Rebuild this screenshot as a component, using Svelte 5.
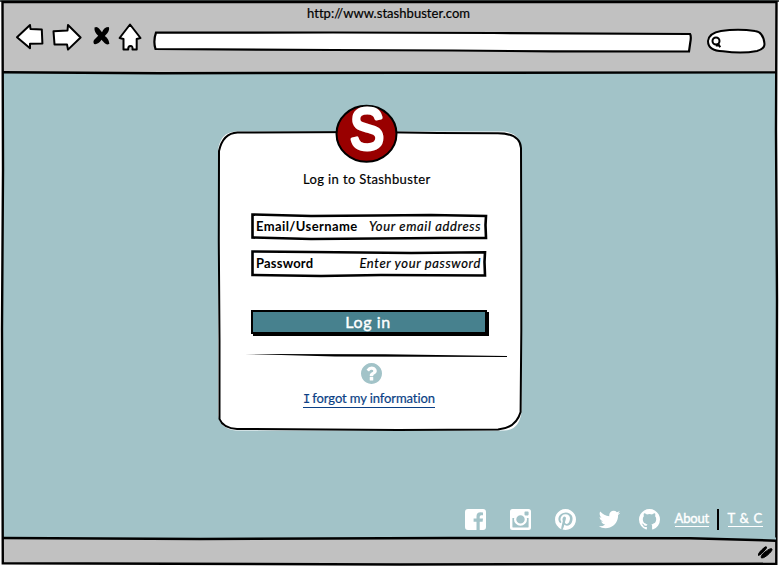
<script>
  const social = [
    { name: 'Facebook', gap: 0, box: '0 0 21 21', d: 'M3 0H18Q21 0 21 3V18Q21 21 18 21H14.7V12.8H17.6L18 9.6H14.7V7.8Q14.7 6.3 16.3 6.3H18V3.4Q17.2 3.2 15.6 3.2Q11.5 3.2 11.5 7.2V9.6H8.6V12.8H11.5V21H3Q0 21 0 18V3Q0 0 3 0Z' },
    { name: 'Instagram', gap: 24, box: '0 0 21 21', d: 'M2.5 0H18.5Q21 0 21 2.5V18.5Q21 21 18.5 21H2.5Q0 21 0 18.5V2.5Q0 0 2.5 0ZM15.3 2.4Q14.5 2.4 14.5 3.2V5.6Q14.5 6.4 15.3 6.4H17.8Q18.6 6.4 18.6 5.6V3.2Q18.6 2.4 17.8 2.4ZM2.4 8.9V17.7Q2.4 18.6 3.3 18.6H17.7Q18.6 18.6 18.6 17.7V8.9H16.8Q17 9.7 17 10.4A6.5 6.3 0 1 1 4 10.4Q4 9.7 4.3 8.9ZM10.5 6.2A4.2 4.2 0 1 0 10.5 14.6A4.2 4.2 0 1 0 10.5 6.2Z' },
    { name: 'Pinterest', gap: 24, box: '128 128 1536 1536', d: 'M1664 896q0 209-103 385.5t-279.5 279.5-385.5 103q-111 0-218-32 59-93 78-164 9-34 54-211 20 39 73 67.5t114 28.5q121 0 216-68.5t147-188.5 52-270q0-114-59.5-214t-172.5-163-255-63q-105 0-196 29t-154.5 77-109 110.5-67 129.5-21.5 134q0 104 40 183t117 111q30 12 38-20 2-7 8-31t8-30q6-23-11-43-51-61-51-151 0-151 104.5-259.5t273.5-108.5q151 0 235.5 82t84.5 213q0 170-68.5 289t-175.5 119q-61 0-98-43.5t-23-104.5q8-35 26.5-93.5t30-103 11.5-75.5q0-50-27-83t-77-33q-62 0-105 57t-43 142q0 73 25 122l-99 418q-17 70-13 177-206-91-333-281t-127-423q0-209 103-385.5t279.5-279.5 385.5-103 385.5 103 279.5 279.5 103 385.5z' },
    { name: 'Twitter', gap: 23, box: '128 128 1536 1536', d: 'M1684 408q-67 98-162 167 1 14 1 42 0 130-38 259.5t-115.5 248.5-184.5 210.5-258 146-323 54.5q-271 0-496-145 35 4 78 4 225 0 401-138-105-2-188-64.5t-114-159.5q33 5 61 5 43 0 85-11-112-23-185.5-111.5t-73.5-205.5v-4q68 38 146 41-66-44-105-115t-39-154q0-88 44-163 121 149 294.5 238.5t371.5 99.5q-8-38-8-74 0-134 94.5-228.5t228.5-94.5q140 0 236 102 109-21 205-78-37 115-142 178 93-10 186-50z' },
    { name: 'GitHub', gap: 19, box: '128 128 1536 1536', d: 'M896 128q209 0 385.5 103t279.5 279.5 103 385.5q0 251-146.5 451.5t-378.5 277.5q-27 5-40-7t-13-30q0-3 .5-76.5t.5-134.5q0-97-52-142 57-6 102.5-18t94-39 81-66.5 53-105 20.5-150.5q0-119-79-206 37-91-8-204-28-9-81 11t-92 44l-38 24q-93-26-192-26t-192 26q-16-11-42.5-27t-83.5-38.5-85-13.5q-45 113-8 204-79 87-79 206 0 85 20.5 150t52.5 105 80.5 67 94 39 102.5 18q-39 36-49 103-21 10-45 15t-57 5-65.5-21.5-55.5-62.5q-19-32-48.5-52t-49.5-24l-20-3q-21 0-29 4.5t-5 11.5 9 14 13 12l7 5q22 10 43.5 38t31.5 51l10 23q13 38 44 61.5t67 30 69.5 7 55.5-3.5l23-4q0 38 .5 88.5t.5 54.5q0 18-13 30t-40 7q-232-77-378.5-277.5t-146.5-451.5q0-209 103-385.5t279.5-279.5 385.5-103z' }
  ];
  const fields = [
    { label: 'Email/Username', hint: 'Your email address', kind: 'email', path: 'M1.5 1.5L60 3L125 2.5L180 2L235 3L234.5 12L235 25L190 25L60 26L1.5 24.5Z' },
    { label: 'Password', hint: 'Enter your password', kind: 'password', path: 'M1.5 1.5L60 2L160 3L234 2.3L233.5 12L234 25.5L130 25L70 26L1.5 25Z' }
  ];
</script>

<div class="browser">
  <header>
    <div class="title"><span>http://www.stashbuster.com</span></div>
    <div class="toolbar">
      <svg class="nav" width="130" height="32" viewBox="0 0 130 32">
        <g fill="#fff" stroke="#000" stroke-width="2" stroke-linejoin="round">
          <path d="M2 16.2L15 4L15.5 8L26.8 8.5L27.4 22.6L15 22.8L15 27.2Z" />
          <path d="M38.5 10.3L52.5 9.5L53 4L65.6 16.5L53 28.6L52 23.4L39.5 23.4Z" />
          <path d="M115 3.5L125.5 17L121.7 18V28.6L117.5 28.5Q118 25 115.5 25Q113 25 113.2 28.5L108.5 28.6V18L104.6 17Z" />
        </g>
        <path d="M79.5 6.5Q82 5 84 7.5L87 11.3Q89 6 93.7 6Q95 8 92.5 12L89.8 15Q94 18 94.4 22.7Q92 24.5 89.5 22L86.5 18.8Q83 24 79 23Q77.5 20 80 18L83.2 14.8Q79 11 79.5 6.5Z" />
      </svg>
      <svg class="address" width="540" height="24" viewBox="0 0 540 24">
        <path d="M3 2.7L180 2.5L340 3L537 4Q538.5 6 537.2 13L536 21.5L400 21.4L300 20.5L180 20L2.5 19Q0 11 3 2.7Z" fill="#fff" stroke="#000" stroke-width="2.2" />
      </svg>
      <svg class="search" width="62" height="28" viewBox="0 0 62 28">
        <path d="M15 4Q32 1.5 49 4Q57.5 5 58.5 17Q58.5 22 51 24Q36 27 17 24.3Q2 24 2 14Q3 6 15 4Z" fill="#fff" stroke="#000" stroke-width="2" />
        <circle cx="10" cy="14" r="3.5" fill="none" stroke="#000" stroke-width="2" />
        <path d="M12 16.5L14.2 20.3M9.8 18.4H13" fill="none" stroke="#000" stroke-width="2" />
      </svg>
    </div>
  </header>

  <main>
    <section class="card">
      <svg class="outline" width="304" height="300" viewBox="0 0 304 300">
        <path d="M18 .5H286Q303 2 303.5 20V280Q302 299 286 299.5H18Q2 298 0 284V20Q2 1 18 .5Z" fill="#fff" />
        <path d="M19.5 1.5L150 1L220 2L279 2.3Q302 2 303 17L303.3 120L303.3 200L302.6 281Q298 297 280 298.5L180 299L19 298Q5 297 1.5 288L1.5 210L.8 110L1 20Q5 2 19.5 1.5Z" fill="#fff" stroke="#000" stroke-width="2" />
      </svg>
      <svg class="logo" width="64" height="60" viewBox="0 0 64 60">
        <ellipse cx="32.5" cy="29.8" rx="30" ry="28" fill="#900" stroke="#000" stroke-width="2" />
        <text x="33" y="45.3" text-anchor="middle" textLength="34" lengthAdjust="spacingAndGlyphs">S</text>
      </svg>
      <h1>Log in to Stashbuster</h1>
      <form onsubmit={(e) => e.preventDefault()}>
        {#each fields as f}
          <div class="field {f.kind}">
            <svg width="237" height="28" viewBox="0 0 237 28"><path d={f.path} fill="#fff" stroke="#000" stroke-width="2.6" /></svg>
            <label for={f.kind}>{f.label}</label>
            <span class="hint" id={f.kind}>{f.hint}</span>
          </div>
        {/each}
        <button><span>Log in</span></button>
      </form>
      <svg class="rule" width="262" height="4" viewBox="0 0 262 4"><path d="M0 0L140 .3L262 1.9V3L90 2.4Z" /></svg>
      <svg class="help" width="21" height="21" viewBox="128 128 1536 1536"><path fill="#a2c3c8" d="M1024 1376v-192q0-14-9-23t-23-9h-192q-14 0-23 9t-9 23v192q0 14 9 23t23 9h192q14 0 23-9t9-23zm256-672q0-88-55.5-163t-138.5-116-170-41q-243 0-371 213-15 24 8 42l132 100q7 6 19 6 16 0 25-12 53-68 86-92 34-24 86-24 48 0 85.5 26t37.5 59q0 38-20 61t-68 45q-63 28-115.5 86.5t-52.5 125.5v36q0 14 9 23t23 9h192q14 0 23-9t9-23q0-19 21.5-49.5t54.5-49.5q32-18 49-28.5t46-35 44.5-48 28-60.5 12.5-81zm384 192q0 209-103 385.5t-279.5 279.5-385.5 103-385.5-103-279.5-279.5-103-385.5 103-385.5 279.5-279.5 385.5-103 385.5 103 279.5 279.5 103 385.5z" /></svg>
      <a class="forgot" href="#forgot"><i>I</i> forgot my information</a>
    </section>
    <nav class="links">
      {#each social as s}
        <svg width="21" height="21" viewBox={s.box} style="margin-left:{s.gap}px" role="img" aria-label={s.name}><path d={s.d} fill="#fff" fill-rule={s.name === 'Instagram' ? 'evenodd' : 'nonzero'} /></svg>
      {/each}
      <a class="about" href="#about">About</a>
      <span class="bar"></span>
      <a class="terms" href="#terms">T &amp; C</a>
    </nav>
  </main>

  <footer>
    <svg width="18" height="15" viewBox="0 0 18 15"><path d="M2.5 10.5Q1.5 8 9 2Q12 1 9.5 4.5Q5 10 2.5 10.5ZM5.5 13Q4 11 9 7Q15 2.5 16 4Q16.5 6 11 10.5Q7 13.500 5.500 13Z" stroke="#000" stroke-width="1" /></svg>
  </footer>

  <svg class="frame" width="779" height="566" viewBox="0 0 779 566">
    <path d="M0 0H779V566H0ZM2 2V564H777V2Z" fill="#fff" fill-rule="evenodd" />
    <path d="M0 1H779" stroke="#444c4b" stroke-width="2" />
    <path d="M2.5 2H776.5L776 130L777 300L776.3 563.8L400 564.5L2.8 563.2L2 330L3 170Z" fill="none" stroke="#000" stroke-width="2.4" />
    <path d="M3 72.3L160 73.2L400 72.8L776 72.4" fill="none" stroke="#000" stroke-width="2.4" />
    <path d="M3 537.500L776 537.500V541L670 538.500L200 539.200L3 538.500Z" fill="#a2c3c8" />
    <path d="M3 538L200 539L450 538L690 538.3L776 540.7" fill="none" stroke="#000" stroke-width="2.5" />
  </svg>
</div>

<style>
  :global(body) { margin: 0; background: #fff; }
  .browser { position: relative; width: 779px; height: 566px; overflow: hidden; display: flex; flex-direction: column; font-family: Lato, "Liberation Sans", sans-serif; color: #000; }
  svg { display: block; flex: none; overflow: visible; }
  header { height: 73px; background: #c1c1c1; display: flex; flex-direction: column; box-sizing: border-box; padding-top: 5px; }
  .title { height: 16px; display: flex; padding-left: 307px; font-size: 13px; line-height: 16px; letter-spacing: 0.04px; white-space: nowrap; -webkit-text-stroke: 0.2px #000; }
  .toolbar { display: flex; align-items: flex-start; padding-left: 15px; }
  .address { margin: 9px 0 0 8px; }
  .search { margin: 6px 0 0 13px; }
  main { flex: 1; min-height: 0; background: #a2c3c8; display: flex; flex-direction: column; }
  .card { position: relative; width: 304px; height: 300px; margin: 58px 0 0 218px; display: flex; flex-direction: column; align-items: flex-start; flex: none; }
  .outline { position: absolute; left: 0; top: 0; }
  .logo { position: absolute; left: 116px; top: -27px; }
  .logo text { font: 400 58px "Liberation Sans", sans-serif; fill: #fff; stroke: #fff; stroke-width: 4px; stroke-linejoin: round; }
  h1 { position: relative; margin: 40px 0 0 85px; font-size: 13px; line-height: 16px; font-weight: 400; letter-spacing: 0.37px; white-space: nowrap; -webkit-text-stroke: 0.2px #000; }
  form { margin: 26px 0 0 33px; display: flex; flex-direction: column; }
  .field { position: relative; height: 28px; width: 231px; padding: 0 1px 0 5px; margin-bottom: 9px; display: flex; justify-content: space-between; align-items: center; font-size: 13px; line-height: 24px; white-space: nowrap; box-sizing: border-box; }
  .field svg { position: absolute; left: 0; top: 0; }
  .field label { position: relative; font-weight: 700; letter-spacing: 0.4px; margin-top: -3px; }
  .field.password label { letter-spacing: 0.2px; }
  .hint { position: relative; font-style: italic; letter-spacing: 0.65px; margin-top: -3px; -webkit-text-stroke: 0.2px #000; }
  button { position: relative; box-sizing: border-box; width: 236px; height: 24px; margin: 23px 0 0; padding: 0 2px 0 0; border: 2px solid #000; background: #47818e; color: #fff; box-shadow: 2px 2px #000; font: 16px/20px Lato, sans-serif; letter-spacing: 0.6px; text-align: center; -webkit-text-stroke: 0.4px #fff; }
  .rule { position: relative; margin: 20px 0 0 27px; }
  .help { position: relative; margin: 5px 0 0 143px; }
  .forgot { position: relative; margin: 7px 0 0 85px; font-size: 13px; line-height: 15px; letter-spacing: -0.1px; color: #0b3f85; text-decoration: none; border-bottom: 1px solid #0b3f85; white-space: nowrap; -webkit-text-stroke: 0.2px #0b3f85; }
  .forgot i { font-family: "DejaVu Sans Mono", monospace; font-style: normal; font-size: 12px; margin-right: -1px; }
  .links { margin: 78px 0 0 464.5px; height: 22px; display: flex; align-items: flex-start; color: #fff; }
  .links a { color: #fff; font-size: 13px; line-height: 16px; text-decoration: none; border-bottom: 1px solid #fff; white-space: nowrap; margin-top: 1px; -webkit-text-stroke: 0.4px #fff; }
  .about { margin-left: 15px; letter-spacing: -0.15px; }
  .bar { width: 2px; height: 21px; background: #000; margin: 0 8.500px 0 8px; }
  .links .terms { letter-spacing: 0.7px; }
  footer { height: 27px; background: #c1c1c1; display: flex; }
  footer svg { margin: 6px 0 0 756px; }
  .frame { position: absolute; left: 0; top: 0; pointer-events: none; }
</style>
